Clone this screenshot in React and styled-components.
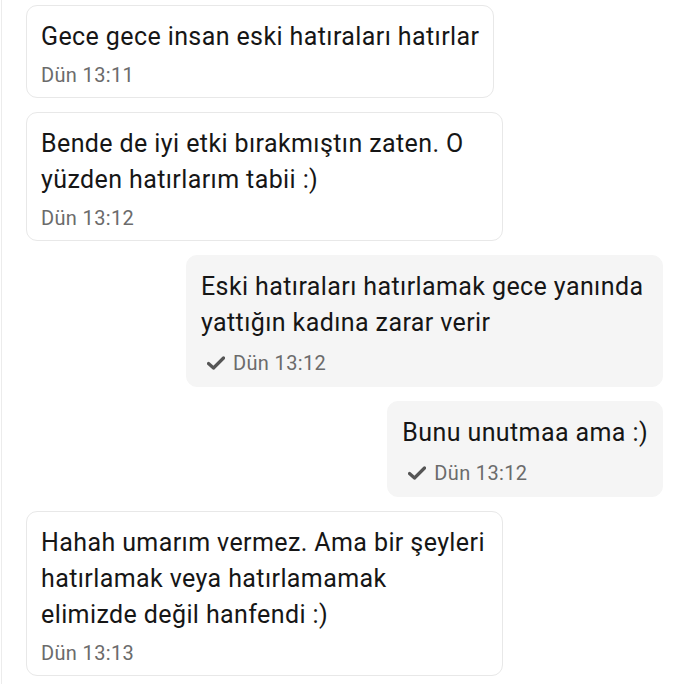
import React from "react";
import styled, { createGlobalStyle } from "styled-components";

const Global = createGlobalStyle`
  html, body { margin: 0; padding: 0; background: #fff; }
  body { font-family: Roboto, "Noto Sans", sans-serif; }
`;

const Page = styled.div`
  margin-left: 1px;
  border-left: 1px solid #ececec;
  min-height: 684px;
  box-sizing: border-box;
  padding: 5px 27px 0 24px;
  display: flex;
  flex-direction: column;
  gap: 14px;
`;

const Row = styled.div`
  display: flex;
  justify-content: ${(p) => (p.$sent ? "flex-end" : "flex-start")};
`;

const Bubble = styled.div`
  max-width: 477px;
  box-sizing: border-box;
  padding: 13px 14px ${(p) => (p.$sent ? "11px" : "10px")} 14px;
  border-radius: 11px;
  background: ${(p) => (p.$sent ? "#f5f5f5" : "#ffffff")};
  border: 1px solid ${(p) => (p.$sent ? "#f5f5f5" : "#e8e8e8")};
`;

const Text = styled.div`
  font-size: 25px;
  line-height: 36px;
  letter-spacing: 0.4px;
  color: #161616;
`;

const Time = styled.div`
  display: flex;
  align-items: center;
  gap: 8px;
  margin-top: ${(p) => (p.$sent ? "10px" : "8px")};
  padding-left: ${(p) => (p.$sent ? "6px" : "0")};
  font-size: 20px;
  line-height: 24px;
  letter-spacing: 0.35px;
  color: #6b6b6b;
`;

const Check = () => (
  <svg width="18" height="14" viewBox="0 0 18 14" aria-hidden="true">
    <path d="M1.5 7.5 L6.5 12 L16.5 2" fill="none" stroke="#555" strokeWidth="3.2" strokeLinecap="round" strokeLinejoin="round" />
  </svg>
);

const messages = [
  { text: "Gece gece insan eski hatıraları hatırlar", time: "Dün 13:11" },
  { text: "Bende de iyi etki bırakmıştın zaten. O yüzden hatırlarım tabii :)", time: "Dün 13:12" },
  { text: "Eski hatıraları hatırlamak gece yanında yattığın kadına zarar verir", time: "Dün 13:12", sent: true },
  { text: "Bunu unutmaa ama :)", time: "Dün 13:12", sent: true },
  { text: "Hahah umarım vermez. Ama bir şeyleri hatırlamak veya hatırlamamak elimizde değil hanfendi :)", time: "Dün 13:13" },
];

export default function App() {
  return (
    <>
      <Global />
      <Page>
        {messages.map((m, i) => (
          <Row key={i} $sent={m.sent}>
            <Bubble $sent={m.sent}>
              <Text>{m.text}</Text>
              <Time $sent={m.sent}>
                {m.sent && <Check />}
                {m.time}
              </Time>
            </Bubble>
          </Row>
        ))}
      </Page>
    </>
  );
}
